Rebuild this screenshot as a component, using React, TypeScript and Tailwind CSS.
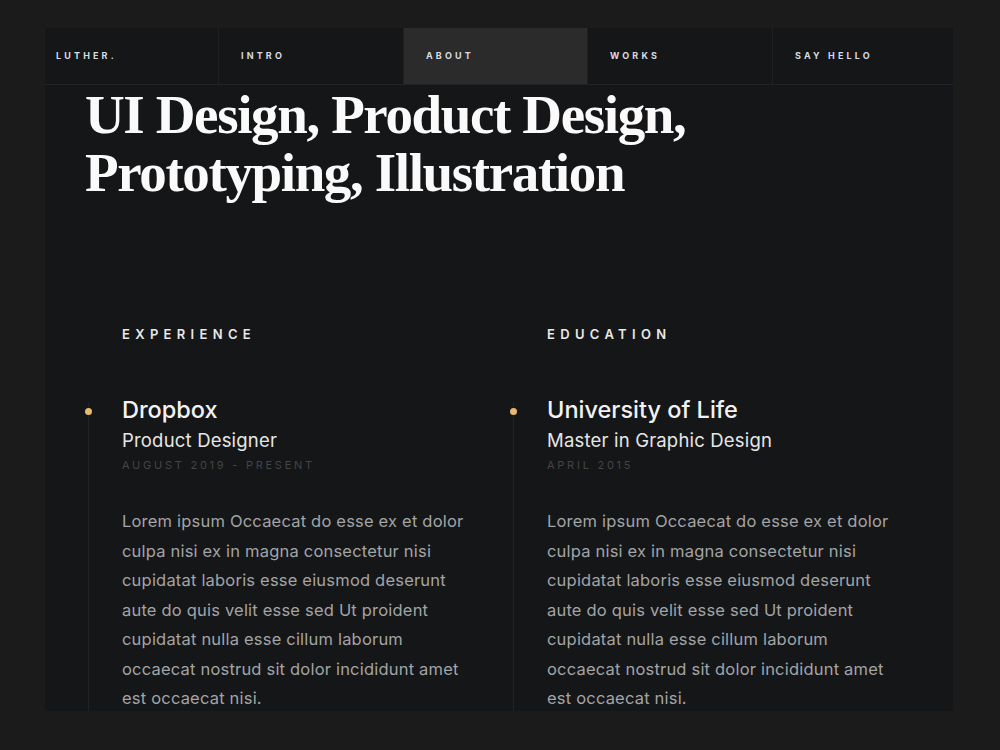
const navItems = [
  { label: "LUTHER.", w: "w-[173px]", pl: "pl-[11px]", active: false },
  { label: "INTRO", w: "w-[185px]", pl: "pl-[22px]", active: false },
  { label: "ABOUT", w: "w-[184px]", pl: "pl-[22px]", active: true },
  { label: "WORKS", w: "w-[185px]", pl: "pl-[22px]", active: false },
  { label: "SAY HELLO", w: "w-[181px]", pl: "pl-[22px]", active: false },
];

const lorem =
  "Lorem ipsum Occaecat do esse ex et dolor culpa nisi ex in magna consectetur nisi cupidatat laboris esse eiusmod deserunt aute do quis velit esse sed Ut proident cupidatat nulla esse cillum laborum occaecat nostrud sit dolor incididunt amet est occaecat nisi.";

type Entry = { title: string; place: string; role: string; date: string };

const columns: Entry[] = [
  { title: "EXPERIENCE", place: "Dropbox", role: "Product Designer", date: "AUGUST 2019 - PRESENT" },
  { title: "EDUCATION", place: "University of Life", role: "Master in Graphic Design", date: "APRIL 2015" },
];

function Column({ entry }: { entry: Entry }) {
  return (
    <div className="flex flex-col">
      <h3 className="pl-[34px] text-[13px] font-semibold tracking-[0.41em] text-[#e8e8e8] leading-[20px]">
        {entry.title}
      </h3>

      {/* timeline item */}
      <div className="relative mt-[58px] border-l border-[#222326] pl-[33px] h-[400px]">
        <span className="absolute left-[-4px] top-[6px] h-[7px] w-[7px] rounded-full bg-[#e9b96e]" />
        <p className="mt-[-7px] text-[23.5px] font-medium leading-[30px] text-[#f2f2f2]">{entry.place}</p>
        <p className="mt-[2px] text-[18.5px] leading-[26px] text-[#e6e6e6] tracking-[0.01em]">{entry.role}</p>
        <p className="mt-[4px] text-[11px] tracking-[0.25em] leading-[16px] text-[#444547]">{entry.date}</p>
        <p className="mt-[34px] w-[352px] text-[16.5px] leading-[29.5px] tracking-[0.012em] text-[#a3a4a6]">
          {lorem}
        </p>
      </div>
    </div>
  );
}

export default function App() {
  return (
    <div
      className="w-[1000px] h-[750px] bg-[#1b1b1b] pt-[28px] pl-[45px]"
      style={{ fontFamily: "Inter, 'Liberation Sans', sans-serif" }}
    >
      <div className="w-[908px] h-[683px] overflow-hidden bg-[#151618] flex flex-col">
        {/* Nav */}
        <nav className="flex h-[57px] shrink-0 border-b border-[#222326]">
          {navItems.map((n, i) => (
            <div
              key={n.label}
              className={`${n.w} ${n.pl} flex items-center ${i > 0 ? "border-l border-[#1f2022]" : ""} ${
                n.active ? "bg-[#2b2b2b]" : ""
              }`}
            >
              <span className="text-[9px] font-bold tracking-[0.35em] text-[#d8dbe0]">{n.label}</span>
            </div>
          ))}
        </nav>

        {/* Heading */}
        <h1
          className="pl-[40px] mt-[1px] text-[55px] font-bold leading-[58px] tracking-[-0.025em] text-[#fafafa]"
          style={{ fontFamily: "'Liberation Serif', 'DejaVu Serif', serif" }}
        >
          UI Design, Product Design,
          <br />
          Prototyping, Illustration
        </h1>

        {/* Experience / Education */}
        <div className="mt-[122px] ml-[43px] grid grid-cols-[425px_425px]">
          {columns.map((c) => (
            <Column key={c.title} entry={c} />
          ))}
        </div>
      </div>
    </div>
  );
}
